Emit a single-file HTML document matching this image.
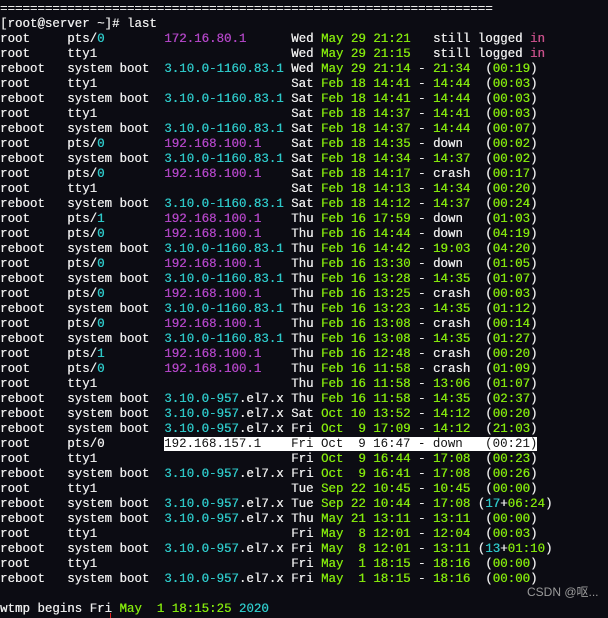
<!DOCTYPE html>
<html><head><meta charset="utf-8"><style>
html,body{margin:0;padding:0;background:#0c0c13;width:608px;height:618px;overflow:hidden}
pre{margin:0;padding:2px 0 0 0;font-family:"Liberation Mono",monospace;font-size:12.45px;line-height:15px;color:#ececec;white-space:pre;text-shadow:0.3px 0 0 currentColor}
.g{color:#84e80c}.c{color:#2ec8c8}.m{color:#b045c4}.p{color:#c8508a}
.hl{background:#fff;color:#111;text-shadow:none}
.wm{position:absolute;left:527px;top:583px;font-family:"Liberation Sans","Noto Sans CJK SC",sans-serif;font-size:12px;color:#9a9a9a}
.tick{position:absolute;left:110px;top:613px;width:1px;height:5px;background:#e02020}
</style></head><body><pre>==================================================================
[root@server ~]# last
root     pts/<span class="c">0</span>        <span class="m">172.16.80.1</span>      Wed <span class="g">May 29 21:21</span>   still logged <span class="p">in</span>
root     tty1                          Wed <span class="g">May 29 21:15</span>   still logged <span class="p">in</span>
reboot   system boot  <span class="c">3.10.0-1160.83.1</span> Wed <span class="g">May 29 21:14</span> - <span class="g">21:34</span>  (<span class="g">00:19</span>)
root     tty1                          Sat <span class="g">Feb 18 14:41</span> - <span class="g">14:44</span>  (<span class="g">00:03</span>)
reboot   system boot  <span class="c">3.10.0-1160.83.1</span> Sat <span class="g">Feb 18 14:41</span> - <span class="g">14:44</span>  (<span class="g">00:03</span>)
root     tty1                          Sat <span class="g">Feb 18 14:37</span> - <span class="g">14:41</span>  (<span class="g">00:03</span>)
reboot   system boot  <span class="c">3.10.0-1160.83.1</span> Sat <span class="g">Feb 18 14:37</span> - <span class="g">14:44</span>  (<span class="g">00:07</span>)
root     pts/<span class="c">0</span>        <span class="m">192.168.100.1</span>    Sat <span class="g">Feb 18 14:35</span> - down   (<span class="g">00:02</span>)
reboot   system boot  <span class="c">3.10.0-1160.83.1</span> Sat <span class="g">Feb 18 14:34</span> - <span class="g">14:37</span>  (<span class="g">00:02</span>)
root     pts/<span class="c">0</span>        <span class="m">192.168.100.1</span>    Sat <span class="g">Feb 18 14:17</span> - crash  (<span class="g">00:17</span>)
root     tty1                          Sat <span class="g">Feb 18 14:13</span> - <span class="g">14:34</span>  (<span class="g">00:20</span>)
reboot   system boot  <span class="c">3.10.0-1160.83.1</span> Sat <span class="g">Feb 18 14:12</span> - <span class="g">14:37</span>  (<span class="g">00:24</span>)
root     pts/<span class="c">1</span>        <span class="m">192.168.100.1</span>    Thu <span class="g">Feb 16 17:59</span> - down   (<span class="g">01:03</span>)
root     pts/<span class="c">0</span>        <span class="m">192.168.100.1</span>    Thu <span class="g">Feb 16 14:44</span> - down   (<span class="g">04:19</span>)
reboot   system boot  <span class="c">3.10.0-1160.83.1</span> Thu <span class="g">Feb 16 14:42</span> - <span class="g">19:03</span>  (<span class="g">04:20</span>)
root     pts/<span class="c">0</span>        <span class="m">192.168.100.1</span>    Thu <span class="g">Feb 16 13:30</span> - down   (<span class="g">01:05</span>)
reboot   system boot  <span class="c">3.10.0-1160.83.1</span> Thu <span class="g">Feb 16 13:28</span> - <span class="g">14:35</span>  (<span class="g">01:07</span>)
root     pts/<span class="c">0</span>        <span class="m">192.168.100.1</span>    Thu <span class="g">Feb 16 13:25</span> - crash  (<span class="g">00:03</span>)
reboot   system boot  <span class="c">3.10.0-1160.83.1</span> Thu <span class="g">Feb 16 13:23</span> - <span class="g">14:35</span>  (<span class="g">01:12</span>)
root     pts/<span class="c">0</span>        <span class="m">192.168.100.1</span>    Thu <span class="g">Feb 16 13:08</span> - crash  (<span class="g">00:14</span>)
reboot   system boot  <span class="c">3.10.0-1160.83.1</span> Thu <span class="g">Feb 16 13:08</span> - <span class="g">14:35</span>  (<span class="g">01:27</span>)
root     pts/<span class="c">1</span>        <span class="m">192.168.100.1</span>    Thu <span class="g">Feb 16 12:48</span> - crash  (<span class="g">00:20</span>)
root     pts/<span class="c">0</span>        <span class="m">192.168.100.1</span>    Thu <span class="g">Feb 16 11:58</span> - crash  (<span class="g">01:09</span>)
root     tty1                          Thu <span class="g">Feb 16 11:58</span> - <span class="g">13:06</span>  (<span class="g">01:07</span>)
reboot   system boot  <span class="c">3.10.0-957</span>.el7.x Thu <span class="g">Feb 16 11:58</span> - <span class="g">14:35</span>  (<span class="g">02:37</span>)
reboot   system boot  <span class="c">3.10.0-957</span>.el7.x Sat <span class="g">Oct 10 13:52</span> - <span class="g">14:12</span>  (<span class="g">00:20</span>)
reboot   system boot  <span class="c">3.10.0-957</span>.el7.x Fri <span class="g">Oct  9 17:09</span> - <span class="g">14:12</span>  (<span class="g">21:03</span>)
root     pts/0        <span class="hl">192.168.157.1    Fri Oct  9 16:47 - down   (00:21)</span>
root     tty1                          Fri <span class="g">Oct  9 16:44</span> - <span class="g">17:08</span>  (<span class="g">00:23</span>)
reboot   system boot  <span class="c">3.10.0-957</span>.el7.x Fri <span class="g">Oct  9 16:41</span> - <span class="g">17:08</span>  (<span class="g">00:26</span>)
root     tty1                          Tue <span class="g">Sep 22 10:45</span> - <span class="g">10:45</span>  (<span class="g">00:00</span>)
reboot   system boot  <span class="c">3.10.0-957</span>.el7.x Tue <span class="g">Sep 22 10:44</span> - <span class="g">17:08</span> (<span class="c">17</span>+<span class="g">06:24</span>)
reboot   system boot  <span class="c">3.10.0-957</span>.el7.x Thu <span class="g">May 21 13:11</span> - <span class="g">13:11</span>  (<span class="g">00:00</span>)
root     tty1                          Fri <span class="g">May  8 12:01</span> - <span class="g">12:04</span>  (<span class="g">00:03</span>)
reboot   system boot  <span class="c">3.10.0-957</span>.el7.x Fri <span class="g">May  8 12:01</span> - <span class="g">13:11</span> (<span class="c">13</span>+<span class="g">01:10</span>)
root     tty1                          Fri <span class="g">May  1 18:15</span> - <span class="g">18:16</span>  (<span class="g">00:00</span>)
reboot   system boot  <span class="c">3.10.0-957</span>.el7.x Fri <span class="g">May  1 18:15</span> - <span class="g">18:16</span>  (<span class="g">00:00</span>)

wtmp begins Fri <span class="g">May</span>  <span class="g">1 18:15:25</span> <span class="c">2020</span></pre>
<div class="wm">CSDN @呕...</div>
<div class="tick"></div>
</body></html>
